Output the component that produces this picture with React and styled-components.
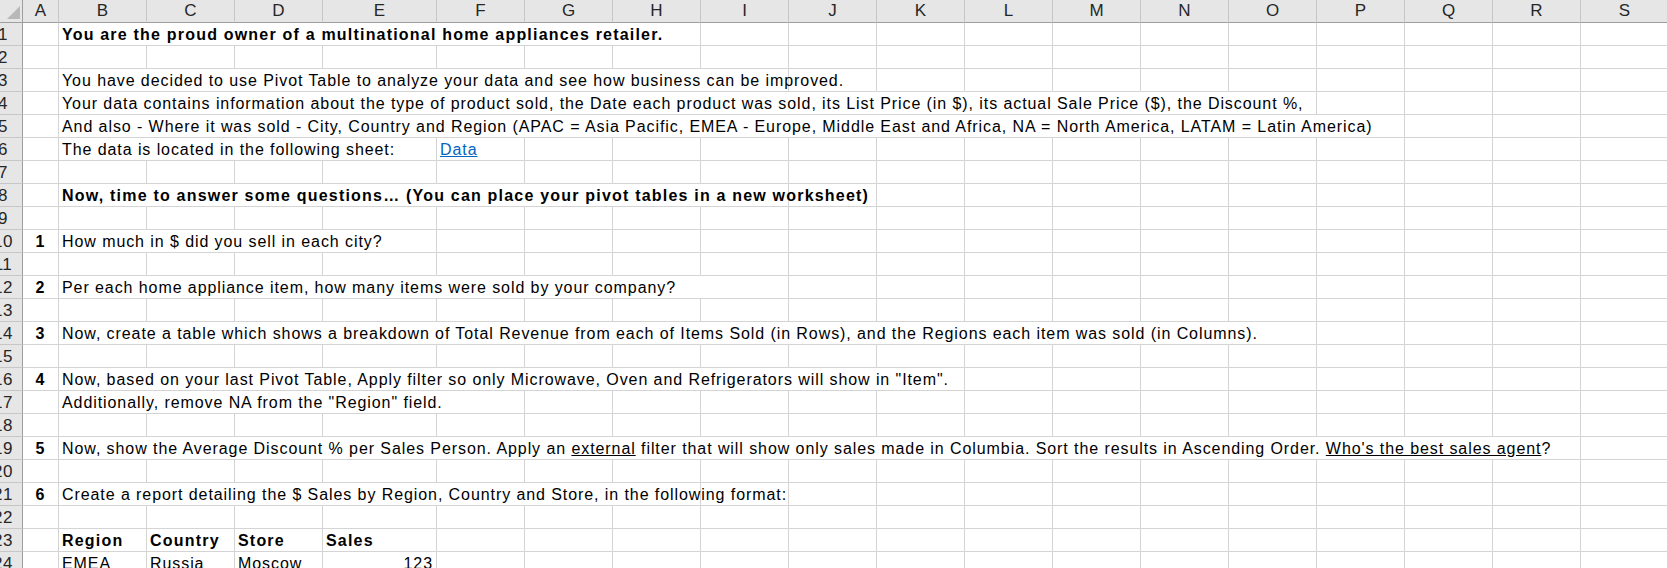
import styled, { createGlobalStyle } from 'styled-components';

const GlobalStyle = createGlobalStyle`
    html, body {
        margin: 0;
        padding: 0;
        background: #FFFFFF;
        overflow: hidden;
    }
    body {
        font-family: "Liberation Sans", Arial, sans-serif;
        color: #000000;
    }
`;

// column widths in px, same as the sheet
const COLS = [
    ['A', 36], ['B', 88], ['C', 88], ['D', 88], ['E', 114], ['F', 88], ['G', 88],
    ['H', 88], ['I', 88], ['J', 88], ['K', 88], ['L', 88], ['M', 88], ['N', 88],
    ['O', 88], ['P', 88], ['Q', 88], ['R', 88], ['S', 88],
];
const colIndex = key => COLS.findIndex(c => c[0] === key);

const Sheet = styled.div`
    display: grid;
    grid-template-columns: 23px ${COLS.map(c => `${c[1]}px`).join(' ')};
    grid-auto-rows: 23px;
    width: max-content;
    font-size: 16px;
`;

const Corner = styled.div`
    background: #E6E6E6;
    border-right: 1px solid #9E9E9E;
    border-bottom: 1px solid #9E9E9E;
    box-sizing: border-box;
    display: flex;
    align-items: flex-end;
    justify-content: flex-end;
    padding: 0 2px 3px 0;
`;

const ColHead = styled.div`
    background: #E6E6E6;
    border-right: 1px solid #C6C6C6;
    border-bottom: 1px solid #9E9E9E;
    box-sizing: border-box;
    text-align: center;
    line-height: 22px;
    font-size: 17px;
    color: #262626;
`;

const RowHead = styled.div`
    background: #E6E6E6;
    border-right: 1px solid #9E9E9E;
    border-bottom: 1px solid #C6C6C6;
    box-sizing: border-box;
    display: flex;
    justify-content: center;
    padding-right: 16px;
    line-height: 23px;
    font-size: 17px;
    letter-spacing: 0.5px;
    color: #262626;
    white-space: nowrap;
`;

const Cell = styled.div`
    grid-column: span ${p => p.$span || 1};
    border-right: 1px solid #D4D4D4;
    border-bottom: 1px solid #D4D4D4;
    box-sizing: border-box;
    padding: 1px 3px 0;
    line-height: 22px;
    white-space: nowrap;
    overflow: visible;
    font-weight: ${p => (p.$bold ? 700 : 400)};
    letter-spacing: ${p => (p.$bold ? '1.2px' : '0.92px')};
    text-align: ${p => p.$align || 'left'};
`;

const Link = styled.span`
    color: #0563C1;
    text-decoration: underline;
`;

const U = styled.span`
    text-decoration: underline;
`;

const ROWS = {
    1: [{ c: 'B', span: 7, bold: true, text: 'You are the proud owner of a multinational home appliances retailer.' }],
    3: [{ c: 'B', span: 8, text: 'You have decided to use Pivot Table to analyze your data and see how business can be improved.' }],
    4: [{ c: 'B', span: 14, text: 'Your data contains information about the type of product sold, the Date each product was sold, its List Price (in $), its actual Sale Price ($), the Discount %,' }],
    5: [{ c: 'B', span: 15, text: 'And also - Where it was sold - City, Country and Region (APAC = Asia Pacific, EMEA - Europe, Middle East and Africa, NA = North America, LATAM = Latin America)' }],
    6: [
        { c: 'B', span: 4, text: 'The data is located in the following sheet:' },
        { c: 'F', text: <Link>Data</Link> },
    ],
    8: [{ c: 'B', span: 8, bold: true, text: 'Now, time to answer some questions… (You can place your pivot tables in a new worksheet)' }],
    10: [
        { c: 'A', bold: true, align: 'center', text: '1' },
        { c: 'B', span: 4, text: 'How much in $ did you sell in each city?' },
    ],
    12: [
        { c: 'A', bold: true, align: 'center', text: '2' },
        { c: 'B', span: 8, text: 'Per each home appliance item, how many items were sold by your company?' },
    ],
    14: [
        { c: 'A', bold: true, align: 'center', text: '3' },
        { c: 'B', span: 14, text: 'Now, create a table which shows a breakdown of Total Revenue from each of Items Sold (in Rows), and the Regions each item was sold (in Columns).' },
    ],
    16: [
        { c: 'A', bold: true, align: 'center', text: '4' },
        { c: 'B', span: 10, text: 'Now, based on your last Pivot Table, Apply filter so only Microwave, Oven and Refrigerators will show in "Item".' },
    ],
    17: [{ c: 'B', span: 5, text: 'Additionally, remove NA from the "Region" field.' }],
    19: [
        { c: 'A', bold: true, align: 'center', text: '5' },
        {
            c: 'B', span: 17, text: (
                <>
                    Now, show the Average Discount % per Sales Person. Apply an <U>external</U> filter that will show only sales made in Columbia. Sort the results in Ascending Order. <U>Who's the best sales agent</U>?
                </>
            ),
        },
    ],
    21: [
        { c: 'A', bold: true, align: 'center', text: '6' },
        { c: 'B', span: 7, text: 'Create a report detailing the $ Sales by Region, Country and Store, in the following format:' },
    ],
    23: [
        { c: 'B', bold: true, text: 'Region' },
        { c: 'C', bold: true, text: 'Country' },
        { c: 'D', bold: true, text: 'Store' },
        { c: 'E', bold: true, text: 'Sales' },
    ],
    24: [
        { c: 'B', text: 'EMEA' },
        { c: 'C', text: 'Russia' },
        { c: 'D', text: 'Moscow' },
        { c: 'E', align: 'right', text: '123' },
    ],
};

function SheetRow({ n }) {
    const entries = ROWS[n] || [];
    const cells = [];
    let i = 0;
    while (i < COLS.length) {
        const entry = entries.find(e => colIndex(e.c) === i);
        if (entry) {
            const span = entry.span || 1;
            cells.push(
                <Cell key={i} $span={span} $bold={entry.bold} $align={entry.align}>
                    {entry.text}
                </Cell>
            );
            i += span;
        } else {
            cells.push(<Cell key={i} />);
            i += 1;
        }
    }
    return (
        <>
            <RowHead>{n}</RowHead>
            {cells}
        </>
    );
}

function App() {
    const rowNumbers = Array.from({ length: 24 }, (_, k) => k + 1);
    return (
        <>
            <GlobalStyle />
            <Sheet>
                <Corner>
                    <svg width="13" height="13" viewBox="0 0 13 13">
                        <polygon points="13,0 13,13 0,13" fill="#B8B8B8" />
                    </svg>
                </Corner>
                {COLS.map(([key]) => (
                    <ColHead key={key}>{key}</ColHead>
                ))}
                {rowNumbers.map(n => (
                    <SheetRow key={n} n={n} />
                ))}
            </Sheet>
        </>
    );
}

export default App;
